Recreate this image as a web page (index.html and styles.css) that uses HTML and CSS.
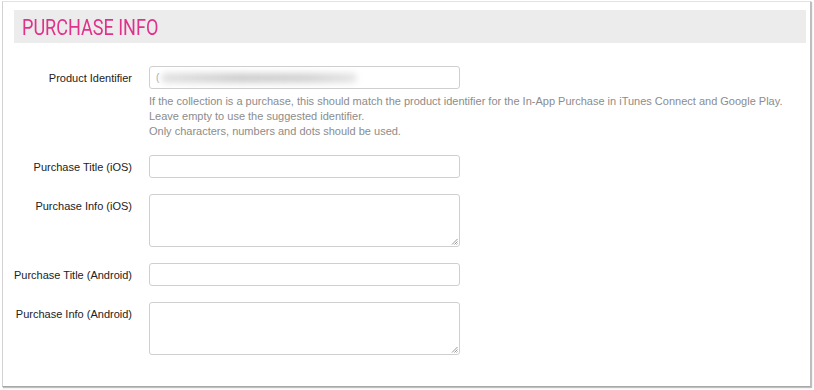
FILE: index.html
```html
<!DOCTYPE html>
<html>
<head>
<meta charset="utf-8">
<link rel="stylesheet" href="styles.css">
</head>
<body>
<div class="window">
  <div class="panel-head"><h2 class="panel-title">PURCHASE INFO</h2></div>
  <div class="form">
    <div class="row">
      <label class="label">Product Identifier</label>
      <div class="field">
        <div class="input input-id"><span class="caret">(</span><span class="blur"></span></div>
        <div class="help">If the collection is a purchase, this should match the product identifier for the In-App Purchase in iTunes Connect and Google Play.<br>Leave empty to use the suggested identifier.<br>Only characters, numbers and dots should be used.</div>
      </div>
    </div>
    <div class="row">
      <label class="label">Purchase Title (iOS)</label>
      <div class="field"><div class="input"></div></div>
    </div>
    <div class="row">
      <label class="label">Purchase Info (iOS)</label>
      <div class="field"><div class="input textarea"><svg class="grip" width="7" height="7" viewBox="0 0 7 7"><path d="M6.5 1L1 6.5M6.5 3.5L3.5 6.5M6.5 5.5L5.5 6.5" stroke="#8a8a8a" stroke-width="0.9"/></svg></div></div>
    </div>
    <div class="row">
      <label class="label">Purchase Title (Android)</label>
      <div class="field"><div class="input"></div></div>
    </div>
    <div class="row">
      <label class="label">Purchase Info (Android)</label>
      <div class="field"><div class="input textarea"><svg class="grip" width="7" height="7" viewBox="0 0 7 7"><path d="M6.5 1L1 6.5M6.5 3.5L3.5 6.5M6.5 5.5L5.5 6.5" stroke="#8a8a8a" stroke-width="0.9"/></svg></div></div>
    </div>
  </div>
</div>
</body>
</html>
```
FILE: styles.css
```css
html, body {
  margin: 0;
  padding: 0;
  background: #ffffff;
}
body {
  width: 814px;
  height: 390px;
  overflow: hidden;
  font-family: "Liberation Sans", Arial, sans-serif;
}
.window {
  margin: 1px 0 0 2px;
  width: 809px;
  height: 386px;
  box-sizing: border-box;
  border-left: 1px solid #d2d2d2;
  border-top: 1px solid #e2e2e2;
  border-right: 1px solid #bdbdbd;
  border-bottom: 1px solid #a8a8a8;
  box-shadow: 1px 1px 1px rgba(0,0,0,0.25);
  background: #fff;
  padding: 8px 4px 0 11px;
}
.panel-head {
  background: #ececec;
  height: 33px;
  display: flex;
  align-items: center;
  padding-left: 8px;
}
.panel-title {
  margin: 0;
  display: inline-block;
  font-family: Roboto, "Liberation Sans", sans-serif;
  font-weight: 400;
  font-size: 22px;
  color: #e0328b;
  line-height: 1;
  padding-top: 2px;
  transform: scaleX(0.82);
  transform-origin: left center;
  white-space: nowrap;
}
.form {
  padding-top: 23px;
  display: flex;
  flex-direction: column;
  gap: 16px;
}
.row {
  display: grid;
  grid-template-columns: 118px 311px;
  column-gap: 17px;
  align-items: start;
}
.label {
  text-align: right;
  font-size: 11px;
  color: #222;
  padding-top: 4px;
  line-height: 16px;
  white-space: nowrap;
}
.input {
  height: 23px;
  box-sizing: border-box;
  border: 1px solid #cfcfcf;
  border-radius: 3px;
  background: #fff;
  position: relative;
}
.input-id {
  display: flex;
  align-items: center;
  padding-left: 6px;
}
.caret {
  font-size: 10px;
  color: #aaa;
}
.blur {
  display: block;
  width: 196px;
  height: 10px;
  margin-left: 2px;
  border-radius: 5px;
  background: linear-gradient(90deg, #e2e2e2, #cfcfcf 40%, #d4d4d4 75%, #e6e6e6);
  filter: blur(3px);
}
.textarea {
  height: 53px;
}
.grip {
  position: absolute;
  right: 1px;
  bottom: 1px;
}
.help {
  width: 660px;
  margin-top: 5px;
  font-size: 11px;
  line-height: 15px;
  color: #8c8c8c;
}
```
